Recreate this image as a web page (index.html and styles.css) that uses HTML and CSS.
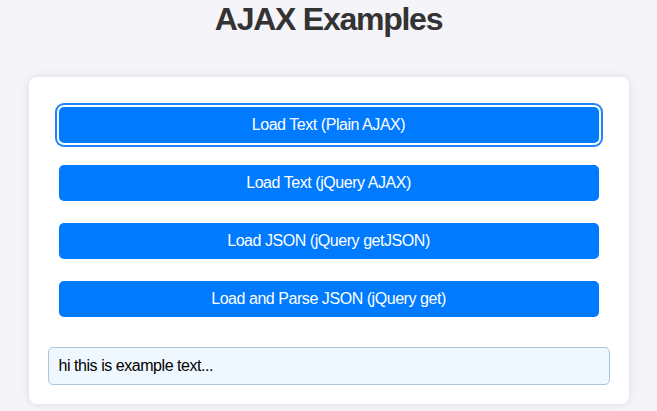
FILE: index.html
```html
<!DOCTYPE html>
<html lang="en">
<head>
<meta charset="utf-8">
<title>AJAX Examples</title>
<link rel="stylesheet" href="styles.css">
</head>
<body>
  <h1 class="title">AJAX Examples</h1>
  <main class="card">
    <div class="actions">
      <button class="btn is-focused" type="button">Load Text (Plain AJAX)</button>
      <button class="btn" type="button">Load Text (jQuery AJAX)</button>
      <button class="btn" type="button">Load JSON (jQuery getJSON)</button>
      <button class="btn" type="button">Load and Parse JSON (jQuery get)</button>
    </div>
    <div class="output">hi this is example text...</div>
  </main>
</body>
</html>
```

FILE: styles.css
```css
html, body {
  margin: 0;
  padding: 0;
}

body {
  background: #f4f4f9;
  font-family: "Liberation Sans", Arial, sans-serif;
  color: #333;
  padding-bottom: 20px;
}

.title {
  margin: 1px 0 39px;
  text-align: center;
  font-size: 32px;
  font-weight: bold;
  line-height: 37px;
  letter-spacing: -1.25px;
  color: #333;
}

.card {
  width: 600px;
  box-sizing: border-box;
  margin: 0 auto;
  background: #fff;
  border-radius: 8px;
  box-shadow: 0 0 10px rgba(0, 0, 0, 0.1);
  padding: 30px 19px 19px;
  display: flex;
  flex-direction: column;
  gap: 30px;
}

.actions {
  display: flex;
  flex-direction: column;
  gap: 22px;
  padding: 0 11px;
}

.btn {
  display: block;
  width: 100%;
  height: 36px;
  border: none;
  border-radius: 5px;
  background: #007bff;
  color: #fff;
  font-family: "Liberation Sans", Arial, sans-serif;
  font-size: 16px;
  letter-spacing: -0.45px;
  padding: 0;
  cursor: pointer;
}

.btn.is-focused {
  box-shadow: 0 0 0 2px #fff, 0 0 0 4px #1a85ff;
}

.output {
  background: #f0f8ff;
  border: 1px solid #b0c4de;
  border-radius: 5px;
  padding: 9px 10px;
  font-size: 16px;
  line-height: 18px;
  letter-spacing: -0.45px;
  color: #000;
}
```
